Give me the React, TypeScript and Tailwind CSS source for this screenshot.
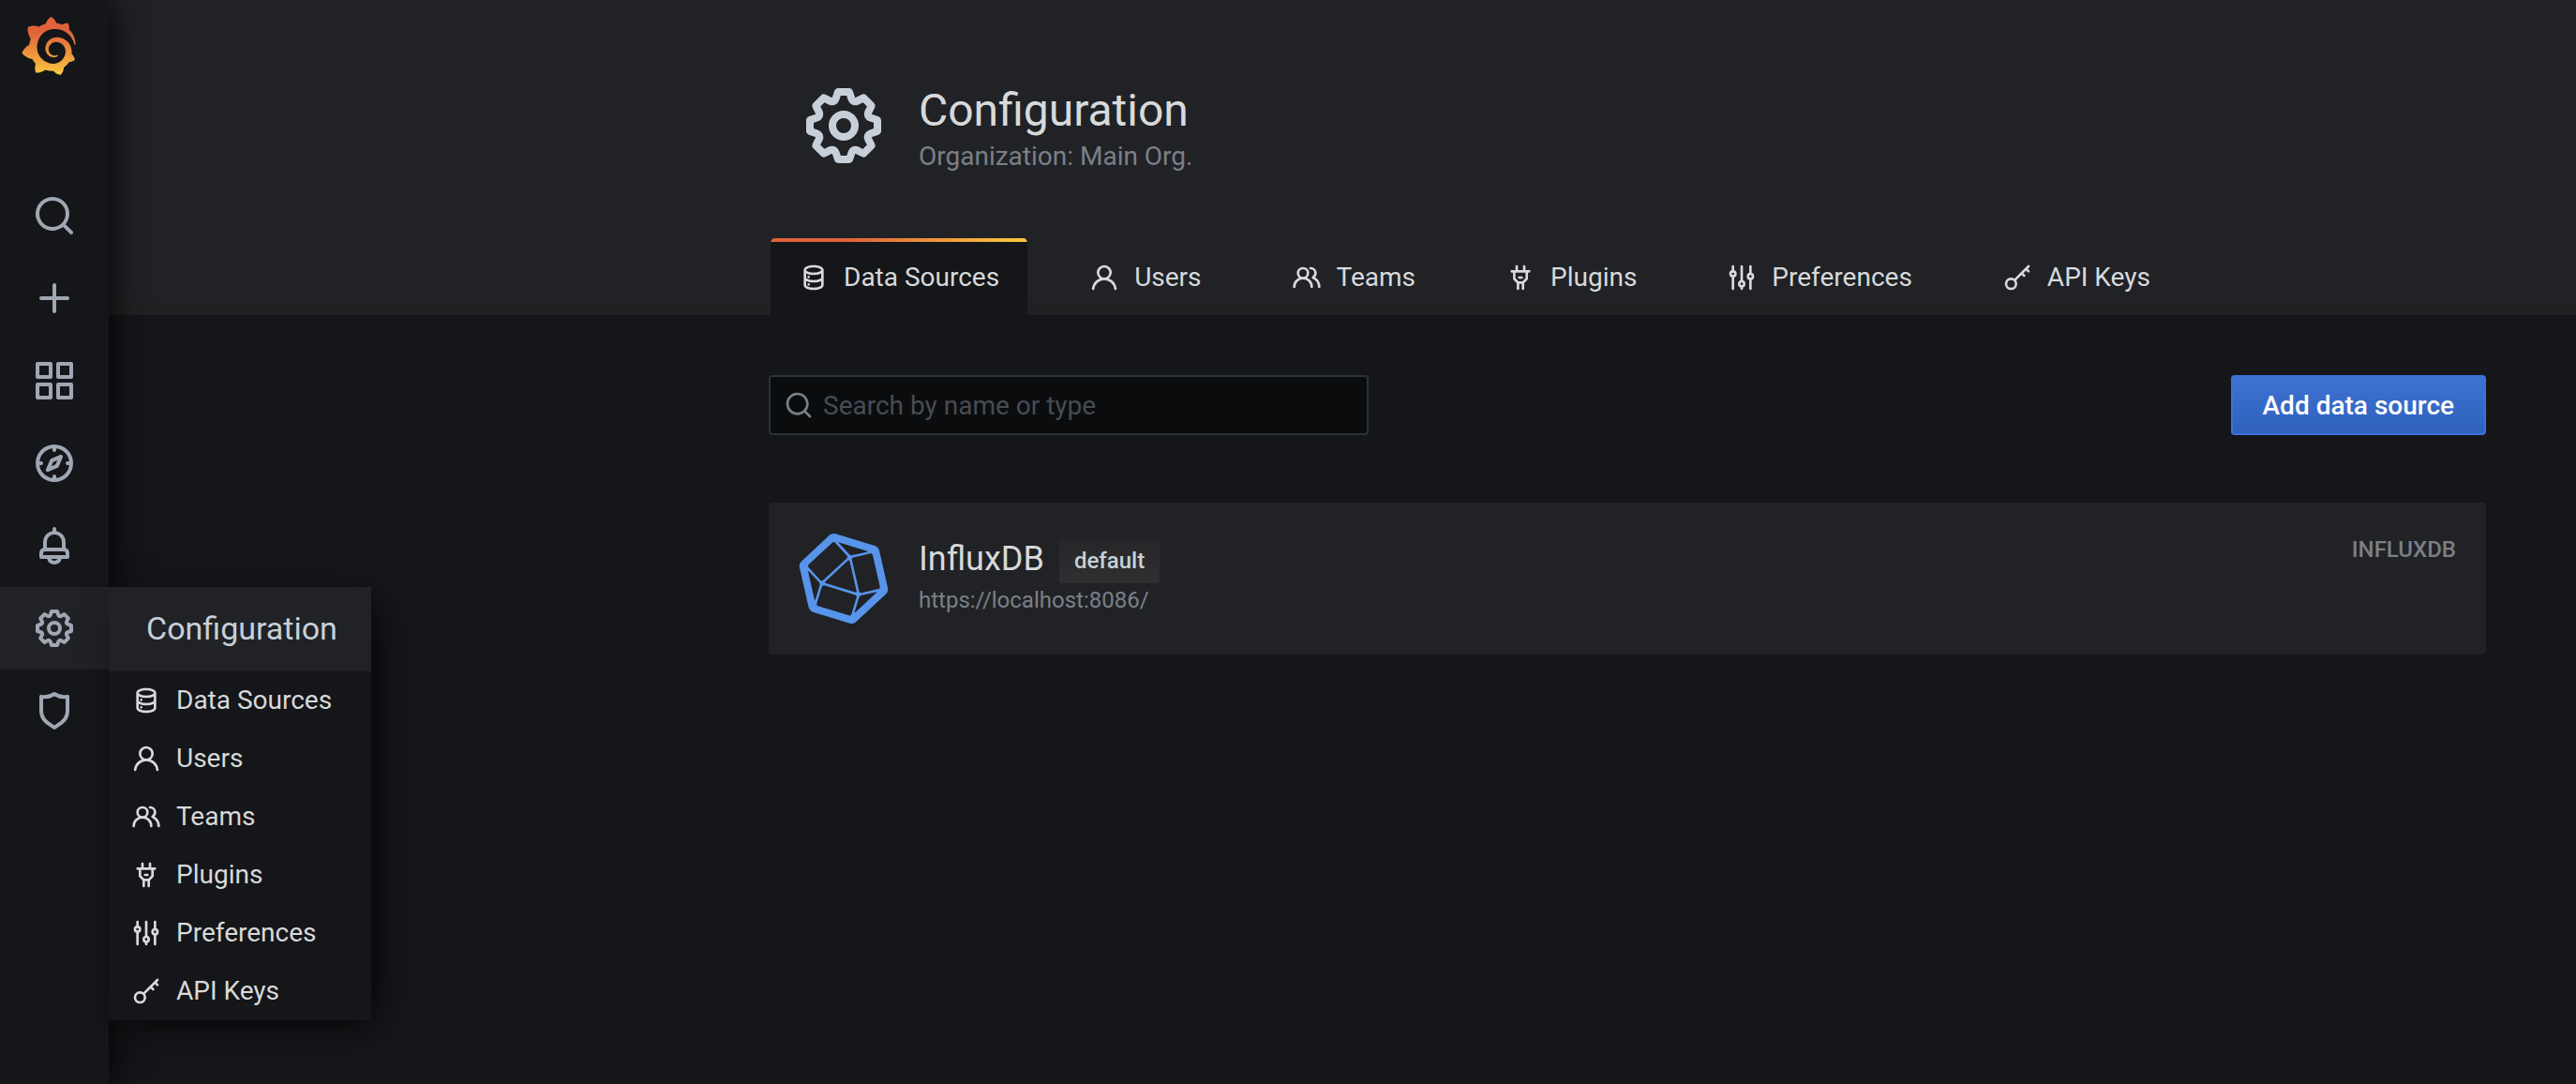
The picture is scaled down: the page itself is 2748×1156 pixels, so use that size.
import type { ReactNode } from "react";
import { SiGrafana, SiInfluxdb } from "react-icons/si";

const paths = {
  search:
    "M21.71,20.29,18,16.61A9,9,0,1,0,16.61,18l3.68,3.68a1,1,0,0,0,1.42,0A1,1,0,0,0,21.71,20.29ZM11,18a7,7,0,1,1,7-7A7,7,0,0,1,11,18Z",
  plus: "M19,11H13V5a1,1,0,0,0-2,0v6H5a1,1,0,0,0,0,2h6v6a1,1,0,0,0,2,0V13h6a1,1,0,0,0,0-2Z",
  apps: "M10,13H3a1,1,0,0,0-1,1v7a1,1,0,0,0,1,1h7a1,1,0,0,0,1-1V14A1,1,0,0,0,10,13ZM9,20H4V15H9ZM21,2H14a1,1,0,0,0-1,1v7a1,1,0,0,0,1,1h7a1,1,0,0,0,1-1V3A1,1,0,0,0,21,2ZM20,9H15V4h5Zm1,4H14a1,1,0,0,0-1,1v7a1,1,0,0,0,1,1h7a1,1,0,0,0,1-1V14A1,1,0,0,0,21,13Zm-1,7H15V15h5ZM10,2H3A1,1,0,0,0,2,3v7a1,1,0,0,0,1,1h7a1,1,0,0,0,1-1V3A1,1,0,0,0,10,2ZM9,9H4V4H9Z",
  compass:
    "M12,2A10,10,0,1,0,22,12,10,10,0,0,0,12,2Zm1,17.93V19a1,1,0,0,0-2,0v.93A8,8,0,0,1,4.07,13H5a1,1,0,0,0,0-2H4.07A8,8,0,0,1,11,4.07V5a1,1,0,0,0,2,0V4.07A8,8,0,0,1,19.93,11H19a1,1,0,0,0,0,2h.93A8,8,0,0,1,13,19.93ZM15.14,7.55l-5,2.12a1,1,0,0,0-.52.52l-2.12,5a1,1,0,0,0,.21,1.1,1,1,0,0,0,.7.3.93.93,0,0,0,.4-.09l5-2.12a1,1,0,0,0,.52-.52l2.12-5a1,1,0,0,0-1.31-1.31Zm-2.49,5.1-2.28,1,1-2.28,2.28-1Z",
  bell: "M18,13.18V10a6,6,0,0,0-5-5.91V3a1,1,0,0,0-2,0V4.09A6,6,0,0,0,6,10v3.18A3,3,0,0,0,4,16v2a1,1,0,0,0,1,1H8.14a4,4,0,0,0,7.72,0H19a1,1,0,0,0,1-1V16A3,3,0,0,0,18,13.18ZM8,10a4,4,0,0,1,8,0v3H8Zm4,10a2,2,0,0,1-1.72-1h3.44A2,2,0,0,1,12,20Zm6-3H6V16a1,1,0,0,1,1-1H17a1,1,0,0,1,1,1Z",
  cog: "M21.32,9.55l-1.89-.63.89-1.78A1,1,0,0,0,20.13,6L18,3.87a1,1,0,0,0-1.15-.19l-1.78.89-.63-1.89A1,1,0,0,0,13.5,2h-3a1,1,0,0,0-.95.68L8.92,4.57,7.14,3.68A1,1,0,0,0,6,3.87L3.87,6a1,1,0,0,0-.19,1.15l.89,1.78-1.89.63A1,1,0,0,0,2,10.5v3a1,1,0,0,0,.68.95l1.89.63-.89,1.78A1,1,0,0,0,3.87,18L6,20.13a1,1,0,0,0,1.15.19l1.78-.89.63,1.89a1,1,0,0,0,.95.68h3a1,1,0,0,0,.95-.68l.63-1.89,1.78.89A1,1,0,0,0,18,20.13L20.13,18a1,1,0,0,0,.19-1.15l-.89-1.78,1.89-.63A1,1,0,0,0,22,13.5v-3A1,1,0,0,0,21.32,9.55ZM20,12.78l-1.2.4A2,2,0,0,0,17.64,16l.57,1.14-1.1,1.1L16,17.64a2,2,0,0,0-2.79,1.16l-.4,1.2H11.22l-.4-1.2A2,2,0,0,0,8,17.64l-1.14.57-1.1-1.1L6.36,16A2,2,0,0,0,5.2,13.18L4,12.78V11.22l1.2-.4A2,2,0,0,0,6.36,8L5.79,6.89l1.1-1.1L8,6.36A2,2,0,0,0,10.82,5.2l.4-1.2h1.56l.4,1.2A2,2,0,0,0,16,6.36l1.14-.57,1.1,1.1L17.64,8a2,2,0,0,0,1.16,2.79l1.2.4ZM12,8a4,4,0,1,0,4,4A4,4,0,0,0,12,8Zm0,6a2,2,0,1,1,2-2A2,2,0,0,1,12,14Z",
  shield:
    "M19.63,3.65a1,1,0,0,0-.84-.2,8,8,0,0,1-6.22-1.27,1,1,0,0,0-1.14,0A8,8,0,0,1,5.21,3.45a1,1,0,0,0-.84.2A1,1,0,0,0,4,4.43v7.45a9,9,0,0,0,3.77,7.33l3.65,2.6a1,1,0,0,0,1.16,0l3.65-2.6A9,9,0,0,0,20,11.88V4.43A1,1,0,0,0,19.63,3.65ZM18,11.88a7,7,0,0,1-2.93,5.7L12,19.77,8.93,17.58A7,7,0,0,1,6,11.88V5.58a10,10,0,0,0,6-1.39,10,10,0,0,0,6,1.39Z",
  database:
    "M8,16.5a1,1,0,1,0,1,1A1,1,0,0,0,8,16.5ZM12,2C8,2,4,3.37,4,6V18c0,2.63,4,4,8,4s8-1.37,8-4V6C20,3.37,16,2,12,2Zm6,16c0,.71-2.28,2-6,2s-6-1.29-6-2V14.73A13.16,13.16,0,0,0,12,16a13.16,13.16,0,0,0,6-1.27Zm0-6c0,.71-2.28,2-6,2s-6-1.29-6-2V8.73A13.16,13.16,0,0,0,12,10a13.16,13.16,0,0,0,6-1.27ZM12,8C8.28,8,6,6.71,6,6s2.28-2,6-2,6,1.29,6,2S15.72,8,12,8ZM8,10.5a1,1,0,1,0,1,1A1,1,0,0,0,8,10.5Z",
  user: "M15.71,12.71a6,6,0,1,0-7.42,0,10,10,0,0,0-6.22,8.18,1,1,0,0,0,2,.22,8,8,0,0,1,15.9,0,1,1,0,0,0,1,.89h.11a1,1,0,0,0,.88-1.1A10,10,0,0,0,15.71,12.71ZM12,12a4,4,0,1,1,4-4A4,4,0,0,1,12,12Z",
  users:
    "M12.3,12.22A4.92,4.92,0,0,0,14,8.5a5,5,0,0,0-10,0,4.92,4.92,0,0,0,1.7,3.72A8,8,0,0,0,1,19.5a1,1,0,0,0,2,0,6,6,0,0,1,12,0,1,1,0,0,0,2,0A8,8,0,0,0,12.3,12.22ZM9,11.5a3,3,0,1,1,3-3A3,3,0,0,1,9,11.5Zm9.74.32A5,5,0,0,0,15,3.5a1,1,0,0,0,0,2,3,3,0,0,1,3,3,3,3,0,0,1-1.5,2.59,1,1,0,0,0-.5.84,1,1,0,0,0,.45.86l.39.26.13.07a7,7,0,0,1,4,6.38,1,1,0,0,0,2,0A9,9,0,0,0,18.74,11.82Z",
  plug: "M19,6H16V3a1,1,0,0,0-2,0V6H10V3A1,1,0,0,0,8,3V6H5A1,1,0,0,0,5,8H6v5a1,1,0,0,0,.29.71L9,16.41V21a1,1,0,0,0,2,0V17h2v4a1,1,0,0,0,2,0V16.41l2.71-2.7A1,1,0,0,0,18,13V8h1a1,1,0,0,0,0-2Zm-3,6.59L13.59,15H10.41L8,12.59V8h8ZM11,13h2a1,1,0,0,0,0-2H11a1,1,0,0,0,0,2Z",
};

type IconName = keyof typeof paths | "sliders" | "key";

function Icon({ name, className }: { name: IconName; className: string }) {
  let drawing: ReactNode;
  if (name === "sliders") {
    drawing = (
      <g fill="none" stroke="currentColor" strokeWidth="2" strokeLinecap="round">
        <path d="M5 3v4M5 11v10M12 3v12M12 19v2M19 3v6M19 13v8" />
        <circle cx="5" cy="9" r="2" />
        <circle cx="12" cy="17" r="2" />
        <circle cx="19" cy="11" r="2" />
      </g>
    );
  } else if (name === "key") {
    drawing = (
      <g fill="none" stroke="currentColor" strokeWidth="2" strokeLinecap="round">
        <circle cx="7" cy="17" r="4" />
        <path d="M10 14L21 3M19 5L21 7M15.5 8.5L17.5 10.5" />
      </g>
    );
  } else {
    drawing = <path d={paths[name]} fill="currentColor" />;
  }
  return (
    <svg viewBox="0 0 24 24" aria-hidden="true" className={`shrink-0 ${className}`}>
      {drawing}
    </svg>
  );
}

const sections: { icon: IconName; label: string }[] = [
  { icon: "database", label: "Data Sources" },
  { icon: "user", label: "Users" },
  { icon: "users", label: "Teams" },
  { icon: "plug", label: "Plugins" },
  { icon: "sliders", label: "Preferences" },
  { icon: "key", label: "API Keys" },
];

const sideItems: { icon: IconName; label: string }[] = [
  { icon: "search", label: "Search" },
  { icon: "plus", label: "Create" },
  { icon: "apps", label: "Dashboards" },
  { icon: "compass", label: "Explore" },
  { icon: "bell", label: "Alerting" },
  { icon: "cog", label: "Configuration" },
  { icon: "shield", label: "Server Admin" },
];

function ConfigurationMenu() {
  return (
    <div className="absolute top-0 left-full w-[280px] bg-[#141619] shadow-[10px_10px_40px_-10px_#000]">
      <a href="#configuration" className="flex h-[90px] items-center bg-[#202226] px-10 pb-[2px] text-[34px] text-[#c7d0d9]">
        Configuration
      </a>
      <ul>
        {sections.map((s) => (
          <li key={s.label}>
            <a href="#section" className="flex h-[62px] items-center gap-4 px-6 text-[28px] text-[#d8d9da]">
              <Icon name={s.icon} className="size-8" />
              {s.label}
            </a>
          </li>
        ))}
      </ul>
    </div>
  );
}

function Sidebar() {
  return (
    <nav aria-label="Main" className="relative z-10 w-[116px] shrink-0 bg-[#141619] shadow-[0_0_40px_#000]">
      <a href="#home" aria-label="Grafana home" className="flex h-[186px] justify-center pt-[18px] pr-3">
        <SiGrafana className="size-[62px]" fill="url(#logo-gradient)" />
        <svg aria-hidden="true" className="absolute size-0">
          <linearGradient id="logo-gradient" x1="0" y1="1" x2="0" y2="0">
            <stop offset="0" stopColor="#fbca3e" />
            <stop offset="0.1" stopColor="#f5b93f" />
            <stop offset="0.75" stopColor="#e0623a" />
            <stop offset="1" stopColor="#e0623a" />
          </linearGradient>
        </svg>
      </a>
      <ul>
        {sideItems.map((item) => {
          const open = item.icon === "cog";
          return (
            <li key={item.label} className="relative">
              <a
                href="#nav"
                aria-label={item.label}
                className={`flex h-[88px] items-center justify-center text-[#9fa7b3] ${open ? "bg-[#202226]" : ""}`}
              >
                <Icon name={item.icon} className="size-12" />
              </a>
              {open && <ConfigurationMenu />}
            </li>
          );
        })}
      </ul>
    </nav>
  );
}

function PageHeader() {
  return (
    <header className="bg-[#202226] bg-[linear-gradient(to_top,#202121,#202226_28px)] pr-24 pl-[704px]">
      <div className="flex h-[254px] gap-8 pt-[86px] pl-8">
        <Icon name="cog" className="size-24 text-[#c7d0d9]" />
        <div className="pt-[2px]">
          <h1 className="text-[48px] leading-[60px] text-[#d8d9da]">Configuration</h1>
          <p className="text-[28px] leading-[38px] text-[#7b8087]">Organization: Main Org.</p>
        </div>
      </div>
      <ul className="flex gap-8">
        {sections.map((s, i) => (
          <li key={s.label}>
            <a
              href="#tab"
              aria-current={i === 0 ? "page" : undefined}
              className={`relative flex h-[82px] items-center gap-4 overflow-hidden rounded-t-[6px] border-x-2 border-transparent bg-clip-padding px-[30px] pt-[2px] text-[28px] text-[#d8d9da] ${
                i === 0 ? "bg-[#141619]" : ""
              }`}
            >
              {i === 0 && (
                <span className="absolute inset-x-0 top-0 h-1 bg-[linear-gradient(to_right,#e0623a_30%,#fbca3e)]" />
              )}
              <Icon name={s.icon} className="size-8" />
              {s.label}
            </a>
          </li>
        ))}
      </ul>
    </header>
  );
}

function DataSourceCard() {
  return (
    <a href="#influxdb" className="flex gap-8 rounded-[4px] bg-[#202226] p-8">
      <SiInfluxdb className="h-[98px] w-24 shrink-0 text-[#5794ea]" />
      <div className="grow">
        <div className="flex gap-4 pt-[6px]">
          <h2 className="text-[36px] leading-[44px] text-[#d8d9da]">InfluxDB</h2>
          <span className="rounded-[4px] bg-linear-to-b from-[#262628] to-[#303032] px-4 text-[24px] leading-[48px] font-medium text-[#c7d0d9]">
            default
          </span>
        </div>
        <p className="text-[24px] leading-[36px] text-[#7b8087]">https://localhost:8086/</p>
      </div>
      <p className="pt-[4px] text-[24px] leading-[28px] font-medium text-[#7b8087] uppercase">influxdb</p>
    </a>
  );
}

export default function App() {
  return (
    <div className="flex min-h-screen bg-[#141619] font-[Roboto,sans-serif]">
      <Sidebar />
      <div className="min-w-0 grow">
        <PageHeader />
        <main className="flex flex-col gap-[72px] pt-16 pr-24 pl-[704px]">
          <div className="flex items-center justify-between">
            <label className="flex h-16 w-[640px] items-center gap-[10px] rounded-[4px] border-2 border-[#2c3235] bg-[#0b0c0e] pr-4 pl-[14px]">
              <Icon name="search" className="size-8 text-[#7b8087]" />
              <input
                type="text"
                aria-label="Search data sources"
                placeholder="Search by name or type"
                className="min-w-0 grow bg-transparent pt-[2px] text-[28px] text-[#d8d9da] outline-none placeholder:text-[#464c54]"
              />
            </label>
            <button
              type="button"
              className="h-16 rounded-[4px] border-2 border-[#3d71d9] bg-linear-to-b from-[#3f73d2] to-[#2f61bd] px-8 pt-[2px] text-[28px] font-medium text-white"
            >
              Add data source
            </button>
          </div>
          <DataSourceCard />
        </main>
      </div>
    </div>
  );
}
